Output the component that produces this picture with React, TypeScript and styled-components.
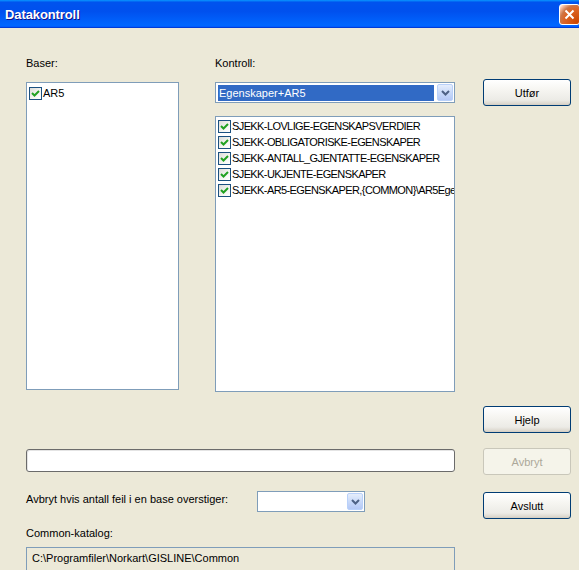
import React, { useState } from 'react';
import styled, { createGlobalStyle } from 'styled-components';

const GlobalStyle = createGlobalStyle`
  html, body {
    margin: 0;
    padding: 0;
    background: #ece9d8;
  }
  body {
    font-family: "Liberation Sans", Arial, sans-serif;
    font-size: 11px;
    color: #000;
  }
`;

const Window = styled.div`
  width: 579px;
  height: 570px;
  overflow: hidden;
  background: #ece9d8;
  display: flex;
  flex-direction: column;
`;

const TitleBar = styled.div`
  flex: none;
  height: 28px;
  box-sizing: border-box;
  padding: 0 0 0 5px;
  display: flex;
  align-items: center;
  justify-content: space-between;
  background: linear-gradient(
    180deg,
    #0997ff,
    #0053ee 8%,
    #0050ee 40%,
    #0066ff 88%,
    #0066ff 93%,
    #005bff 95%,
    #003dd7 96%,
    #003dd7
  );
`;

const Title = styled.span`
  color: #fff;
  font-family: "Liberation Sans", Arial, sans-serif;
  font-weight: bold;
  font-size: 13px;
  letter-spacing: -0.1px;
  text-shadow: 1px 1px #0f1089;
`;

const CloseButton = styled.button`
  width: 21px;
  height: 21px;
  margin-right: -1px;
  padding: 0;
  border: 1px solid #fff;
  border-radius: 3px;
  display: flex;
  align-items: center;
  justify-content: center;
  background: radial-gradient(
    circle at 90% 90%,
    #cc4600 0,
    #dc6527 55%,
    #cd7546 70%,
    #ffccb2 90%,
    #fff 100%
  );
`;

const Content = styled.div`
  display: flex;
  gap: 28px;
  padding: 28px 8px 0 26px;
`;

const MainColumn = styled.div`
  width: 429px;
  display: flex;
  flex-direction: column;
`;

const TopGrid = styled.div`
  display: grid;
  grid-template-columns: 153px 240px;
  column-gap: 36px;
  align-items: start;
`;

const Field = styled.div`
  display: flex;
  flex-direction: column;
`;

const Label = styled.div`
  height: 14px;
  line-height: 14px;
  margin-bottom: 12px;
  white-space: nowrap;
`;

const ListBox = styled.div<{ $height: number }>`
  height: ${p => p.$height}px;
  box-sizing: border-box;
  border: 1px solid #7f9db9;
  background: #fff;
  padding: ${p => (p.$height > 300 ? '2px 2px' : '1px 2px')};
  overflow: hidden;
`;

const ListItem = styled.div`
  display: flex;
  align-items: center;
  height: 16px;
  white-space: nowrap;
`;

const ItemText = styled.span<{ $caps?: boolean }>`
  margin-left: 1px;
  letter-spacing: ${p => (p.$caps ? '-0.6px' : '0')};
`;

const CheckBox = styled.span`
  flex: none;
  width: 13px;
  height: 13px;
  box-sizing: border-box;
  border: 1px solid #1c5180;
  background: linear-gradient(135deg, #dcdcd7 0%, #f4f4f0 55%, #ffffff 100%);
  display: flex;
  align-items: center;
  justify-content: center;
`;

const Combo = styled.div<{ $width?: number }>`
  width: ${p => (p.$width ? `${p.$width}px` : 'auto')};
  height: 21px;
  box-sizing: border-box;
  border: 1px solid #7f9db9;
  background: #fff;
  padding: 1px;
  display: flex;
  align-items: center;
  margin-bottom: ${p => (p.$width ? 0 : 13)}px;
`;

const ComboValue = styled.div<{ $selected?: boolean }>`
  flex: 1;
  height: 16px;
  line-height: 16px;
  margin: 0 3px 0 1px;
  padding-left: 1px;
  color: ${p => (p.$selected ? '#fff' : '#000')};
  background: ${p => (p.$selected ? '#316ac5' : 'transparent')};
  white-space: nowrap;
  overflow: hidden;
`;

const DropButton = styled.div`
  flex: none;
  width: 16px;
  height: 17px;
  box-sizing: border-box;
  border: 1px solid #b9d1fa;
  border-radius: 2px;
  background: linear-gradient(180deg, #e6eefc 0%, #c9daf9 50%, #b4c8f6 100%);
  display: flex;
  align-items: center;
  justify-content: center;
`;

const TextBox = styled.div<{ $top: number; $readonly?: boolean }>`
  margin-top: ${p => p.$top}px;
  height: ${p => (p.$readonly ? 24 : 23)}px;
  box-sizing: border-box;
  border: 1px solid ${p => (p.$readonly ? '#7f9db9' : '#6b6b6b')};
  border-radius: ${p => (p.$readonly ? 0 : 3)}px;
  background: ${p => (p.$readonly ? '#ece9d8' : '#fff')};
  box-shadow: ${p => (p.$readonly ? 'none' : 'inset 1px 1px 0 #e4e4e4')};
  padding-left: 5px;
  line-height: 20px;
  white-space: nowrap;
`;

const ThresholdRow = styled.div`
  display: flex;
  align-items: center;
  margin-top: 19px;
`;

const ThresholdLabel = styled.span`
  width: 231px;
  flex: none;
  padding-bottom: 6px;
`;

const CommonLabel = styled.div`
  margin-top: 14px;
  height: 14px;
  line-height: 14px;
  margin-bottom: 7px;
`;

const ButtonColumn = styled.div`
  width: 88px;
  display: flex;
  flex-direction: column;
`;

const Button = styled.button<{ $top: number }>`
  margin-top: ${p => p.$top}px;
  width: 88px;
  height: 27px;
  padding: 0;
  border: 1px solid #003c74;
  border-radius: 3px;
  font-family: "Liberation Sans", Arial, sans-serif;
  font-size: 11px;
  font-weight: normal;
  color: #000;
  background: linear-gradient(
    180deg,
    #ffffff 0%,
    #f6f5f1 40%,
    #ecebe6 80%,
    #d6d0c5 100%
  );
  box-shadow: inset 0 -1px 0 #d6d0c5;

  &:disabled {
    border-color: #c9c7ba;
    background: #f5f4ea;
    box-shadow: none;
    color: #aca899;
  }
`;

const Check = () => (
  <svg width="9" height="9" viewBox="0 0 9 9">
    <path d="M1 4 L3.5 6.5 L8 2" fill="none" stroke="#21a121" strokeWidth="2" />
  </svg>
);

const Chevron = () => (
  <svg width="9" height="6" viewBox="0 0 9 6">
    <path d="M1 1 L4.5 4.5 L8 1" fill="none" stroke="#4d6185" strokeWidth="2" />
  </svg>
);

const checks = [
  'SJEKK-LOVLIGE-EGENSKAPSVERDIER',
  'SJEKK-OBLIGATORISKE-EGENSKAPER',
  'SJEKK-ANTALL_GJENTATTE-EGENSKAPER',
  'SJEKK-UKJENTE-EGENSKAPER',
  'SJEKK-AR5-EGENSKAPER,{COMMON}\\AR5Egenskaper.txt',
];

export default function App() {
  const [running] = useState(false);

  return (
    <>
      <GlobalStyle />
      <Window>
        <TitleBar>
          <Title>Datakontroll</Title>
          <CloseButton aria-label="Lukk">
            <svg width="11" height="11" viewBox="0 0 11 11">
              <path d="M1.5 1.5 L9.5 9.5 M9.5 1.5 L1.5 9.5" stroke="#fff" strokeWidth="2" />
            </svg>
          </CloseButton>
        </TitleBar>

        <Content>
          <MainColumn>
            <TopGrid>
              <Field>
                <Label>Baser:</Label>
                <ListBox $height={308}>
                  <ListItem>
                    <CheckBox>
                      <Check />
                    </CheckBox>
                    <ItemText>AR5</ItemText>
                  </ListItem>
                </ListBox>
              </Field>
              <Field>
                <Label>Kontroll:</Label>
                <Combo>
                  <ComboValue $selected>Egenskaper+AR5</ComboValue>
                  <DropButton>
                    <Chevron />
                  </DropButton>
                </Combo>
                <ListBox $height={276}>
                  {checks.map(c => (
                    <ListItem key={c}>
                      <CheckBox>
                        <Check />
                      </CheckBox>
                      <ItemText $caps>{c}</ItemText>
                    </ListItem>
                  ))}
                </ListBox>
              </Field>
            </TopGrid>

            <TextBox $top={57} />

            <ThresholdRow>
              <ThresholdLabel>Avbryt hvis antall feil i en base overstiger:</ThresholdLabel>
              <Combo $width={108}>
                <ComboValue />
                <DropButton>
                  <Chevron />
                </DropButton>
              </Combo>
            </ThresholdRow>

            <CommonLabel>Common-katalog:</CommonLabel>
            <TextBox $top={0} $readonly>
              C:\Programfiler\Norkart\GISLINE\Common
            </TextBox>
          </MainColumn>

          <ButtonColumn>
            <Button $top={23}>Utfør</Button>
            <Button $top={300}>Hjelp</Button>
            <Button $top={15} disabled={!running}>
              Avbryt
            </Button>
            <Button $top={17}>Avslutt</Button>
          </ButtonColumn>
        </Content>
      </Window>
    </>
  );
}
